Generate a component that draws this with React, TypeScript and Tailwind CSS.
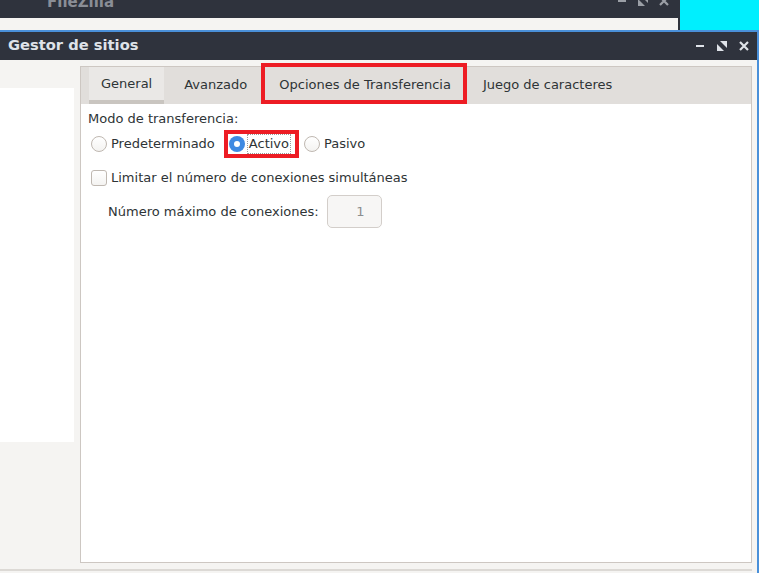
import React from 'react';

function Minimize({ color }: { color: string }) {
  return (
    <svg width="9" height="10" viewBox="0 0 9 10">
      <rect x="0" y="4" width="8" height="2" fill={color} />
    </svg>
  );
}

function Maximize({ color }: { color: string }) {
  return (
    <svg width="10" height="10" viewBox="0 0 10 10">
      <polygon points="3,0 10,0 10,7" fill={color} />
      <polygon points="0,3 0,10 7,10" fill={color} />
    </svg>
  );
}

function Close({ color }: { color: string }) {
  return (
    <svg width="10" height="10" viewBox="0 0 10 10">
      <path d="M1 1 L9 9 M9 1 L1 9" stroke={color} strokeWidth="2.2" />
    </svg>
  );
}

function Radio({ checked }: { checked?: boolean }) {
  if (checked) {
    return (
      <span className="w-[16px] h-[16px] rounded-full bg-[#3f8ae2] flex items-center justify-center shrink-0">
        <span className="w-[6px] h-[6px] rounded-full bg-white" />
      </span>
    );
  }
  return <span className="w-[16px] h-[16px] rounded-full border border-[#bfb8b1] bg-gradient-to-b from-white to-[#f4f3f1] shrink-0" />;
}

const tabs = ['General', 'Avanzado', 'Opciones de Transferencia', 'Juego de caracteres'];

export default function App() {
  return (
    <div className="w-[759px] h-[573px] overflow-hidden bg-[#f5f4f2] font-['DejaVu_Sans',sans-serif] text-[13px] text-[#2e3436] flex flex-col">
      {/* ventana FileZilla de fondo */}
      <div className="flex h-[30px] shrink-0">
        <div className="w-[680px] flex flex-col border-r-2 border-[#2f333d]">
          <div className="h-[18px] bg-[#2f333d] flex items-start justify-between overflow-hidden pl-[47px] pr-[9px]">
            <span className="-mt-[5px] text-[15px] leading-none font-bold text-[#8a8e96]">FileZilla</span>
            <div className="-mt-[4px] flex items-center gap-[11px] opacity-70">
              <Minimize color="#c9cdd3" />
              <Maximize color="#c9cdd3" />
              <Close color="#c9cdd3" />
            </div>
          </div>
          <div className="flex-1 bg-[#f5f4f2]" />
        </div>
        <div className="flex-1 bg-[#00effe]" />
      </div>

      {/* Gestor de sitios */}
      <div className="flex-1 flex flex-col border-t-2 border-r-2 border-[#4a90d9] min-h-0">
        <div className="h-[28px] shrink-0 bg-[#2f333d] flex items-center justify-between pl-[8px] pr-[8px] pb-[2px]">
          <span className="font-bold text-[14.7px] text-[#dfe3e9]">Gestor de sitios</span>
          <div className="flex items-center gap-[12px] pt-[1px]">
            <Minimize color="#dfe3e9" />
            <Maximize color="#dfe3e9" />
            <Close color="#dfe3e9" />
          </div>
        </div>

        <div className="h-[509px] shrink-0 flex">
          <div className="w-[74px] mt-[28px] h-[354px] bg-white shrink-0" />

          <div className="ml-[6px] mr-[5px] mt-[6px] h-[497px] flex-1 flex flex-col border border-[#cdc7c2]">
            <div className="h-[37px] shrink-0 bg-[#e1dedb] flex pl-[8px] gap-[8px]">
              {tabs.map((t, i) => (
                <div
                  key={t}
                  className={
                    'relative px-[12px] flex items-center ' +
                    (i === 0 ? 'bg-[#eae8e6] border-b-[4px] border-[#c9c5c0]' : 'pb-[1px]')
                  }
                >
                  {t}
                  {i === 2 && (
                    <span className="absolute -left-[6px] -right-[4px] -top-[4px] bottom-0 border-[4px] border-[#ed1c24]" />
                  )}
                </div>
              ))}
            </div>

            <div className="flex-1 bg-white pl-[7px] pt-[7px]">
              <div className="leading-[16px]">Modo de transferencia:</div>

              <div className="mt-[9px] ml-[3px] flex items-center h-[16px] gap-[14px] leading-[16px]">
                <label className="flex items-center gap-[4px]">
                  <Radio />
                  <span>Predeterminado</span>
                </label>
                <label className="relative flex items-center gap-[4px]">
                  <Radio checked />
                  <span className="outline outline-1 outline-dotted outline-[#9a9a9a] outline-offset-[1px]">Activo</span>
                  <span className="absolute -left-[5px] -right-[10px] -top-[6px] -bottom-[6px] border-[4px] border-[#ed1c24]" />
                </label>
                <label className="flex items-center gap-[4px] ml-[1px]">
                  <Radio />
                  <span>Pasivo</span>
                </label>
              </div>

              <div className="mt-[18px] ml-[3px] flex items-center gap-[4px] h-[16px] leading-[16px]">
                <span className="w-[16px] h-[16px] rounded-[3px] border border-[#bfb8b1] bg-gradient-to-b from-white to-[#f4f3f1] shrink-0" />
                <span>Limitar el número de conexiones simultáneas</span>
              </div>

              <div className="mt-[9px] ml-[20px] flex items-center gap-[8px]">
                <span>Número máximo de conexiones:</span>
                <div className="w-[55px] h-[33px] rounded-[5px] border border-[#d3ceca] bg-[#f7f6f5] flex items-center justify-end pr-[16px] text-[#8b8e8f]">
                  1
                </div>
              </div>
            </div>
          </div>
        </div>

        <div className="h-[2px] w-[752px] bg-[#dcd9d5] shrink-0" />
        <div className="flex-1" />
      </div>
    </div>
  );
}
